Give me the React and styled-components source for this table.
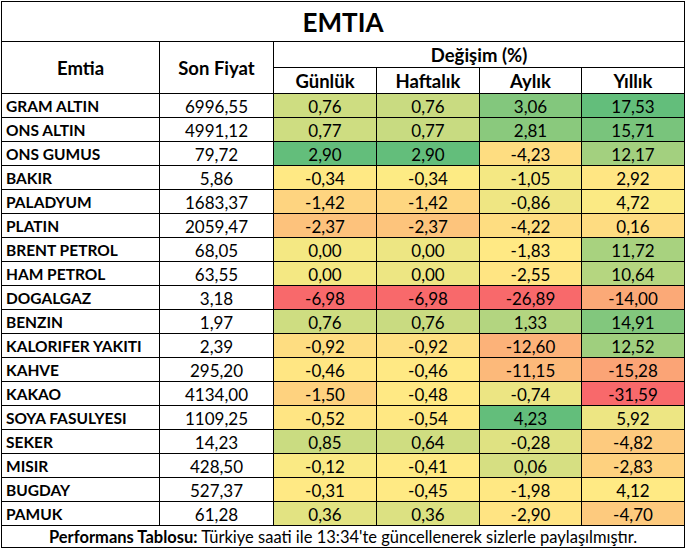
import React from 'react'
import styled, { createGlobalStyle } from 'styled-components'

const rows = [
    ['GRAM ALTIN', '6996,55', '0,76', '0,76', '3,06', '17,53'],
    ['ONS ALTIN', '4991,12', '0,77', '0,77', '2,81', '15,71'],
    ['ONS GUMUS', '79,72', '2,90', '2,90', '-4,23', '12,17'],
    ['BAKIR', '5,86', '-0,34', '-0,34', '-1,05', '2,92'],
    ['PALADYUM', '1683,37', '-1,42', '-1,42', '-0,86', '4,72'],
    ['PLATIN', '2059,47', '-2,37', '-2,37', '-4,22', '0,16'],
    ['BRENT PETROL', '68,05', '0,00', '0,00', '-1,83', '11,72'],
    ['HAM PETROL', '63,55', '0,00', '0,00', '-2,55', '10,64'],
    ['DOGALGAZ', '3,18', '-6,98', '-6,98', '-26,89', '-14,00'],
    ['BENZIN', '1,97', '0,76', '0,76', '1,33', '14,91'],
    ['KALORIFER YAKITI', '2,39', '-0,92', '-0,92', '-12,60', '12,52'],
    ['KAHVE', '295,20', '-0,46', '-0,46', '-11,15', '-15,28'],
    ['KAKAO', '4134,00', '-1,50', '-0,48', '-0,74', '-31,59'],
    ['SOYA FASULYESI', '1109,25', '-0,52', '-0,54', '4,23', '5,92'],
    ['SEKER', '14,23', '0,85', '0,64', '-0,28', '-4,82'],
    ['MISIR', '428,50', '-0,12', '-0,41', '0,06', '-2,83'],
    ['BUGDAY', '527,37', '-0,31', '-0,45', '-1,98', '4,12'],
    ['PAMUK', '61,28', '0,36', '0,36', '-2,90', '-4,70'],
]

const RED = [248, 105, 107]
const YELLOW = [255, 235, 132]
const GREEN = [99, 190, 123]

const num = (s) => parseFloat(s.replace(',', '.'))
const mix = (a, b, t) => `rgb(${a.map((v, i) => Math.round(v + (b[i] - v) * t)).join(',')})`

// excel style 3 colour scale, midpoint = 50th percentile
const colourScale = (values) => {
    const sorted = [...values].sort((a, b) => a - b)
    const min = sorted[0]
    const max = sorted[sorted.length - 1]
    const pos = (sorted.length - 1) / 2
    const lo = Math.floor(pos)
    const mid = sorted[lo] + (sorted[Math.ceil(pos)] - sorted[lo]) * (pos - lo)
    return (v) => v <= mid
        ? mix(RED, YELLOW, mid === min ? 1 : (v - min) / (mid - min))
        : mix(YELLOW, GREEN, max === mid ? 1 : (v - mid) / (max - mid))
}

const scales = [2, 3, 4, 5].map(c => colourScale(rows.map(r => num(r[c]))))

const App = () =>
    <>
        <GlobalStyle />
        <Table>
            <Title>EMTIA</Title>
            <Head $rows={2}>Emtia</Head>
            <Head $rows={2}>Son Fiyat</Head>
            <Head $cols={4}>Değişim (%)</Head>
            <Head>Günlük</Head>
            <Head>Haftalık</Head>
            <Head>Aylık</Head>
            <Head>Yıllık</Head>
            {rows.map(([name, price, ...changes]) =>
                <React.Fragment key={name}>
                    <Name>{name}</Name>
                    <Cell>{price}</Cell>
                    {changes.map((c, i) =>
                        <Cell key={i} $bg={scales[i](num(c))}>{c}</Cell>
                    )}
                </React.Fragment>
            )}
            <Footer><b>Performans Tablosu:</b> Türkiye saati ile 13:34'te güncellenerek sizlerle paylaşılmıştır.</Footer>
        </Table>
    </>

export default App

const
    GlobalStyle = createGlobalStyle`
        body {
            margin: 0;
            background: #fff;
            font-family: Lato, "Open Sans", sans-serif;
            color: #000;
        }
    `,
    Table = styled.div`
        display: grid;
        grid-template-columns: 157px 113px 102px 102px 101px 102px;
        grid-template-rows: 39px 25px 25px repeat(18, 23px) 21px;
        gap: 1px;
        padding: 1px;
        margin: 1px 0 0 1px;
        width: max-content;
        background: #000;
    `,
    Title = styled.div`
        grid-column: span 6;
        display: flex;
        align-items: center;
        justify-content: center;
        background: #fff;
        font-size: 26px;
        font-weight: 700;
    `,
    Head = styled.div`
        grid-column: span ${p => p.$cols || 1};
        grid-row: span ${p => p.$rows || 1};
        display: flex;
        align-items: center;
        justify-content: center;
        background: #fff;
        font-size: 18.5px;
        font-weight: 700;
        padding-top: 1px;
    `,
    Cell = styled.div`
        display: flex;
        align-items: center;
        justify-content: center;
        background: ${p => p.$bg || '#fff'};
        font-size: 17px;
        padding-top: 1px;
    `,
    Name = styled(Cell)`
        justify-content: flex-start;
        padding-left: 4px;
        font-weight: 700;
        font-size: 15.5px;
    `,
    Footer = styled.div`
        grid-column: span 6;
        display: flex;
        align-items: center;
        justify-content: center;
        background: #fff;
        font-size: 16.5px;
        white-space: pre;
        b {
            font-weight: 700;
        }
    `
